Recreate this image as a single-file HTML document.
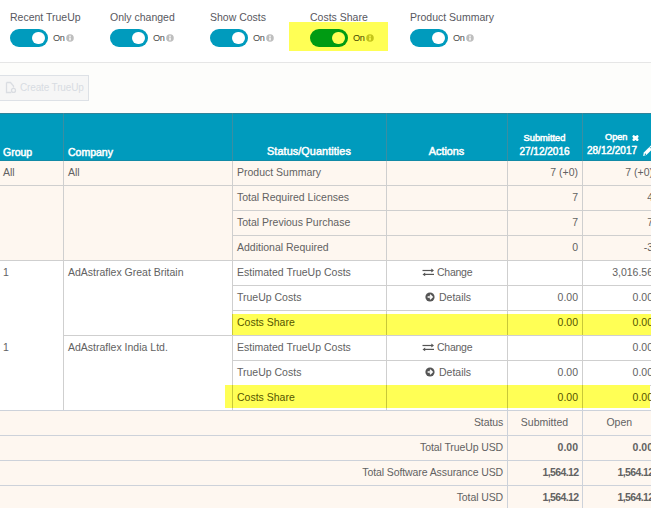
<!DOCTYPE html>
<html><head><meta charset="utf-8">
<style>
*{margin:0;padding:0;box-sizing:border-box}
html,body{width:651px;height:508px;overflow:hidden;background:#fdfdfb;font-family:"Liberation Sans",sans-serif;color:#626262}
.a{position:absolute}
.top{left:0;top:0;width:651px;height:62px;background:#fff}
.sep{left:0;top:62px;width:651px;height:1px;background:#e6e6e6}
.tl{font-size:10.5px;color:#585860;white-space:nowrap;line-height:12px}
.tg{width:38px;height:18px;border-radius:9px;background:#009bbd}
.kn{width:12.4px;height:12.4px;border-radius:50%;background:#fff}
.on{font-size:9.2px;color:#4a4a4a;line-height:10px;letter-spacing:-0.5px}
.inf{width:8px;height:8px;line-height:0}
.btn{left:-1px;top:75px;width:90px;height:26px;border:1px solid #dde1e6;background:#f6f6f6}
.hdr{left:0;top:113px;width:651px;height:48px;background:#009bbd}
.hv{top:113px;height:48px;width:1px;background:#3a8ea2}
.ht{color:#fff;font-weight:normal;font-size:10.5px;white-space:nowrap;line-height:12px;-webkit-text-stroke:0.5px #fff}
.bg{background:#fef7f0}
.hl{height:1px;background:#cfcfcf}
.vl{width:1px;background:#cfcfcf}
.c{font-size:10.5px;white-space:nowrap;line-height:12px}
.r{text-align:right}
.hi{background:#ffff55}
.ol{color:#555500}
.ov{width:1px;background:#c8c838}
</style></head><body>
<div class="a top"></div>
<div class="a sep"></div>

<!-- toggles -->
<div class="a hi" style="left:289px;top:22px;width:99px;height:29px"></div>
<div class="a tl" style="left:10px;top:11px">Recent TrueUp</div>
<div class="a tl" style="left:110px;top:11px">Only changed</div>
<div class="a tl" style="left:210px;top:11px">Show Costs</div>
<div class="a tl" style="left:310px;top:11px">Costs Share</div>
<div class="a tl" style="left:410px;top:11px">Product Summary</div>

<div class="a tg" style="left:10px;top:29px"></div><div class="a kn" style="left:32.3px;top:32px"></div>
<div class="a tg" style="left:110px;top:29px"></div><div class="a kn" style="left:132.3px;top:32px"></div>
<div class="a tg" style="left:210px;top:29px"></div><div class="a kn" style="left:232.3px;top:32px"></div>
<div class="a tg" style="left:310px;top:29px;background:#009b13"></div><div class="a kn" style="left:332.3px;top:32px;background:#ffff55"></div>
<div class="a tg" style="left:410px;top:29px"></div><div class="a kn" style="left:432.3px;top:32px"></div>

<div class="a on" style="left:53px;top:33px">On</div><div class="a inf" style="left:66px;top:34px"><svg width="8" height="8" viewBox="0 0 8 8"><circle cx="4" cy="4" r="3.8" fill="#bebebe"/><rect x="3.25" y="3.5" width="1.5" height="2.9" fill="#fff"/><rect x="3.25" y="1.6" width="1.5" height="1.3" fill="#fff"/></svg></div>
<div class="a on" style="left:153px;top:33px">On</div><div class="a inf" style="left:166px;top:34px"><svg width="8" height="8" viewBox="0 0 8 8"><circle cx="4" cy="4" r="3.8" fill="#bebebe"/><rect x="3.25" y="3.5" width="1.5" height="2.9" fill="#fff"/><rect x="3.25" y="1.6" width="1.5" height="1.3" fill="#fff"/></svg></div>
<div class="a on" style="left:253px;top:33px">On</div><div class="a inf" style="left:266px;top:34px"><svg width="8" height="8" viewBox="0 0 8 8"><circle cx="4" cy="4" r="3.8" fill="#bebebe"/><rect x="3.25" y="3.5" width="1.5" height="2.9" fill="#fff"/><rect x="3.25" y="1.6" width="1.5" height="1.3" fill="#fff"/></svg></div>
<div class="a on" style="left:353px;top:33px;color:#444400">On</div><div class="a inf" style="left:366px;top:34px"><svg width="8" height="8" viewBox="0 0 8 8"><circle cx="4" cy="4" r="3.8" fill="#c4c419"/><rect x="3.25" y="3.5" width="1.5" height="2.9" fill="#ffff55"/><rect x="3.25" y="1.6" width="1.5" height="1.3" fill="#ffff55"/></svg></div>
<div class="a on" style="left:453px;top:33px">On</div><div class="a inf" style="left:466px;top:34px"><svg width="8" height="8" viewBox="0 0 8 8"><circle cx="4" cy="4" r="3.8" fill="#bebebe"/><rect x="3.25" y="3.5" width="1.5" height="2.9" fill="#fff"/><rect x="3.25" y="1.6" width="1.5" height="1.3" fill="#fff"/></svg></div>

<!-- button -->
<div class="a btn"></div>
<svg class="a" style="left:5px;top:81px" width="12" height="13" viewBox="0 0 12 13"><path d="M1.5 1.5H5.5L8.5 5V6.6M6.3 11.5H1.5V1.5" fill="none" stroke="#dadde2" stroke-width="1.3"/><circle cx="8.5" cy="9.4" r="2" fill="none" stroke="#dadde2" stroke-width="1.3"/></svg><div class="a" style="left:20px;top:82px;font-size:10px;color:#d8dce2;line-height:12px;white-space:nowrap;letter-spacing:-0.15px">Create TrueUp</div>

<!-- table header -->
<div class="a hdr"></div>
<div class="a" style="left:0;top:113px;width:651px;height:1px;background:#2f8399"></div>
<div class="a" style="left:0;top:160px;width:651px;height:1px;background:#128aa6"></div>
<div class="a hv" style="left:63px"></div>
<div class="a hv" style="left:232px"></div>
<div class="a hv" style="left:386px"></div>
<div class="a hv" style="left:507px"></div>
<div class="a hv" style="left:582px"></div>
<div class="a ht" style="left:3px;top:146px">Group</div>
<div class="a ht" style="left:68px;top:146px">Company</div>
<div class="a ht" style="left:232px;width:154px;text-align:center;top:145.3px;font-size:10.8px;letter-spacing:0.1px">Status/Quantities</div>
<div class="a ht" style="left:386px;width:121px;text-align:center;top:145.3px;font-size:10.8px">Actions</div>
<div class="a ht" style="left:507px;width:75px;text-align:center;top:132px;font-size:9.3px">Submitted</div>
<div class="a ht" style="left:507px;width:75px;text-align:center;top:146px;font-size:10px">27/12/2016</div>
<div class="a ht" style="left:605px;top:131.3px;font-size:9.2px">Open</div>
<svg class="a" style="left:631px;top:134px" width="9" height="8" viewBox="0 0 9 8"><path d="M2.7 2.5L6.3 5.7M6.3 2.5L2.7 5.7" stroke="#fff" stroke-width="2.6" stroke-linecap="round"/></svg>
<div class="a ht" style="left:587px;top:145px;font-size:10px">28/12/2017</div>
<svg class="a" style="left:642px;top:144px" width="14" height="13" viewBox="0 0 14 13"><path d="M1.1 11.9L1.8 8.6L12 -1.6L14.6 0.8L4.4 11Z" fill="#fff"/><path d="M7.6 2.8L10.1 5.3" stroke="#0a9ab8" stroke-width="0.8"/><circle cx="3.4" cy="10.2" r="0.75" fill="#0a9ab8"/></svg>

<!-- body backgrounds -->
<div class="a bg" style="left:0;top:161px;width:651px;height:99px"></div>
<div class="a" style="left:0;top:260px;width:651px;height:150px;background:#fff"></div>
<div class="a bg" style="left:0;top:410px;width:651px;height:98px"></div>

<!-- horizontal lines -->
<div class="a hl" style="left:0;top:185px;width:651px"></div>
<div class="a hl" style="left:232px;top:210px;width:419px"></div>
<div class="a hl" style="left:232px;top:235px;width:419px"></div>
<div class="a hl" style="left:0;top:260px;width:651px"></div>
<div class="a hl" style="left:232px;top:285px;width:419px"></div>
<div class="a hl" style="left:232px;top:310px;width:419px"></div>
<div class="a hl" style="left:63px;top:335px;width:588px"></div>
<div class="a hl" style="left:232px;top:360px;width:419px"></div>
<div class="a hl" style="left:232px;top:385px;width:419px"></div>
<div class="a hl" style="left:0;top:410px;width:651px;background:#cdd2da"></div>
<div class="a hl" style="left:0;top:435px;width:651px;background:#cdd2da"></div>
<div class="a hl" style="left:0;top:460px;width:651px;background:#cdd2da"></div>
<div class="a hl" style="left:0;top:485px;width:651px;background:#cdd2da"></div>

<!-- vertical lines -->
<div class="a vl" style="left:63px;top:161px;height:249px"></div>
<div class="a vl" style="left:232px;top:161px;height:249px"></div>
<div class="a vl" style="left:386px;top:161px;height:249px"></div>
<div class="a vl" style="left:507px;top:161px;height:249px"></div><div class="a vl" style="left:507px;top:410px;height:98px;background:#cdd2da"></div>
<div class="a vl" style="left:582px;top:161px;height:249px"></div><div class="a vl" style="left:582px;top:410px;height:98px;background:#cdd2da"></div>

<!-- highlights -->
<div class="a hi" style="left:232px;top:314px;width:419px;height:21px"></div>
<div class="a hi" style="left:225px;top:385px;width:425px;height:23px"></div>
<div class="a ov" style="left:232px;top:314px;height:21px"></div>
<div class="a ov" style="left:386px;top:314px;height:21px"></div>
<div class="a ov" style="left:507px;top:314px;height:21px"></div>
<div class="a ov" style="left:582px;top:314px;height:21px"></div>
<div class="a ov" style="left:232px;top:385px;height:23px"></div>
<div class="a ov" style="left:386px;top:385px;height:23px"></div>
<div class="a ov" style="left:507px;top:385px;height:23px"></div>
<div class="a ov" style="left:582px;top:385px;height:23px"></div>

<!-- body text -->
<div class="a c" style="left:3px;top:166px">All</div>
<div class="a c" style="left:68px;top:166px">All</div>
<div class="a c" style="left:237px;top:166px">Product Summary</div>
<div class="a c r" style="left:507px;width:71px;top:166px">7 (+0)</div>
<div class="a c r" style="left:582px;width:71px;top:166px">7 (+0)</div>

<div class="a c" style="left:237px;top:191px">Total Required Licenses</div>
<div class="a c r" style="left:507px;width:71px;top:191px">7</div>
<div class="a c r" style="left:582px;width:71px;top:191px">4</div>
<div class="a c" style="left:237px;top:216px">Total Previous Purchase</div>
<div class="a c r" style="left:507px;width:71px;top:216px">7</div>
<div class="a c r" style="left:582px;width:71px;top:216px">7</div>
<div class="a c" style="left:237px;top:241px">Additional Required</div>
<div class="a c r" style="left:507px;width:71px;top:241px">0</div>
<div class="a c r" style="left:582px;width:71px;top:241px">-3</div>

<div class="a c" style="left:3px;top:266px">1</div>
<div class="a c" style="left:68px;top:266px">AdAstraflex Great Britain</div>
<div class="a c" style="left:237px;top:266px">Estimated TrueUp Costs</div>
<svg class="a" style="left:422px;top:268px" width="13" height="9" viewBox="0 0 13 9"><path d="M0.5 2.5H10.5" stroke="#555" stroke-width="1.2"/><path d="M9.3 0.6L12 2.5L9.3 4.4Z" fill="#555"/><path d="M2 6.4H12" stroke="#555" stroke-width="1.2"/><path d="M3.2 4.5L0.5 6.4L3.2 8.3Z" fill="#555"/></svg><div class="a c" style="left:437px;top:266px;letter-spacing:-0.25px">Change</div>
<div class="a c r" style="left:582px;width:71px;top:266px">3,016.56</div>
<div class="a c" style="left:237px;top:291px">TrueUp Costs</div>
<svg class="a" style="left:425.1px;top:292.3px" width="10" height="10" viewBox="0 0 10 10"><circle cx="5" cy="5" r="4.6" fill="#555"/><path d="M2.6 5H7M5 2.8L7.2 5L5 7.2" stroke="#fff" stroke-width="1.4" fill="none"/></svg><div class="a c" style="left:439px;top:291px">Details</div>
<div class="a c r" style="left:507px;width:71px;top:291px">0.00</div>
<div class="a c r" style="left:582px;width:71px;top:291px">0.00</div>
<div class="a c ol" style="left:237px;top:316px">Costs Share</div>
<div class="a c r ol" style="left:507px;width:71px;top:316px">0.00</div>
<div class="a c r ol" style="left:582px;width:71px;top:316px">0.00</div>

<div class="a c" style="left:3px;top:341px">1</div>
<div class="a c" style="left:68px;top:341px">AdAstraflex India Ltd.</div>
<div class="a c" style="left:237px;top:341px">Estimated TrueUp Costs</div>
<svg class="a" style="left:422px;top:343px" width="13" height="9" viewBox="0 0 13 9"><path d="M0.5 2.5H10.5" stroke="#555" stroke-width="1.2"/><path d="M9.3 0.6L12 2.5L9.3 4.4Z" fill="#555"/><path d="M2 6.4H12" stroke="#555" stroke-width="1.2"/><path d="M3.2 4.5L0.5 6.4L3.2 8.3Z" fill="#555"/></svg><div class="a c" style="left:437px;top:341px;letter-spacing:-0.25px">Change</div>
<div class="a c r" style="left:582px;width:71px;top:341px">0.00</div>
<div class="a c" style="left:237px;top:366px">TrueUp Costs</div>
<svg class="a" style="left:425.1px;top:367.3px" width="10" height="10" viewBox="0 0 10 10"><circle cx="5" cy="5" r="4.6" fill="#555"/><path d="M2.6 5H7M5 2.8L7.2 5L5 7.2" stroke="#fff" stroke-width="1.4" fill="none"/></svg><div class="a c" style="left:439px;top:366px">Details</div>
<div class="a c r" style="left:507px;width:71px;top:366px">0.00</div>
<div class="a c r" style="left:582px;width:71px;top:366px">0.00</div>
<div class="a c ol" style="left:237px;top:391px">Costs Share</div>
<div class="a c r ol" style="left:507px;width:71px;top:391px">0.00</div>
<div class="a c r ol" style="left:582px;width:71px;top:391px">0.00</div>

<!-- summary -->
<div class="a c r" style="left:300px;width:203.1px;letter-spacing:-0.1px;top:416px">Status</div>
<div class="a c" style="left:507px;width:75px;text-align:center;top:416px">Submitted</div>
<div class="a c" style="left:579.3px;width:80px;text-align:center;top:416px">Open</div>
<div class="a c r" style="left:300px;width:203.1px;letter-spacing:-0.1px;top:441px">Total TrueUp USD</div>
<div class="a c r" style="left:507px;width:71px;top:441px;font-weight:bold">0.00</div>
<div class="a c r" style="left:582px;width:71px;top:441px;font-weight:bold">0.00</div>
<div class="a c r" style="left:300px;width:203.1px;letter-spacing:-0.1px;top:466px">Total Software Assurance USD</div>
<div class="a c r" style="left:507px;width:71.6px;top:466px;font-weight:bold;letter-spacing:-0.6px">1,564.12</div>
<div class="a c r" style="left:582px;width:71.6px;top:466px;font-weight:bold;letter-spacing:-0.6px">1,564.12</div>
<div class="a c r" style="left:300px;width:203.1px;letter-spacing:-0.1px;top:491px">Total USD</div>
<div class="a c r" style="left:507px;width:71.6px;top:491px;font-weight:bold;letter-spacing:-0.6px">1,564.12</div>
<div class="a c r" style="left:582px;width:71.6px;top:491px;font-weight:bold;letter-spacing:-0.6px">1,564.12</div>

</body></html>
